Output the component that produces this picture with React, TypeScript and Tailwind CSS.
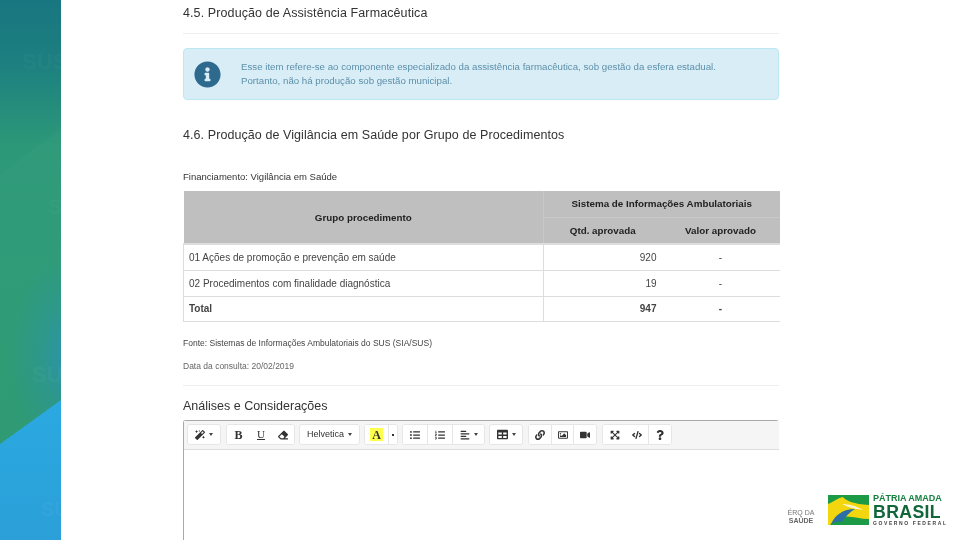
import React from "react";
import {
  FaMagic, FaEraser, FaListUl, FaListOl, FaAlignLeft,
  FaTable, FaLink, FaRegImage, FaVideo, FaExpandArrowsAlt, FaCode, FaQuestion, FaInfoCircle,
} from "react-icons/fa";

const Caret = () => (
  <span className="ml-1 inline-block h-0 w-0 border-x-[2px] border-t-[3px] border-x-transparent border-t-[#444]" />
);

function Btn({ w, children, last }: { w: string; children: React.ReactNode; last?: boolean }) {
  return (
    <div className={`flex h-full items-center justify-center bg-white text-[#333] ${w} ${last ? "" : "border-r border-[#e6e6e6]"}`}>
      {children}
    </div>
  );
}

function Group({ children }: { children: React.ReactNode }) {
  return (
    <div className="flex h-[21px] overflow-hidden rounded-[3px] border border-[#e6e6e6] bg-white">{children}</div>
  );
}

function Sidebar() {
  return (
    <div className="relative h-full w-[61px] shrink-0 overflow-hidden">
      <svg width="61" height="540" viewBox="0 0 61 540" className="block">
        <defs>
          <linearGradient id="v" x1="0" y1="0" x2="0" y2="1">
            <stop offset="0" stopColor="#187680" />
            <stop offset="0.12" stopColor="#1d8080" />
            <stop offset="0.27" stopColor="#2d9878" />
            <stop offset="0.5" stopColor="#309c78" />
            <stop offset="0.85" stopColor="#2f9a72" />
          </linearGradient>
          <radialGradient id="r" gradientUnits="userSpaceOnUse" cx="0" cy="0" r="1" gradientTransform="translate(72 358) scale(62 105)">
            <stop offset="0" stopColor="#2a93b4" stopOpacity="1" />
            <stop offset="0.5" stopColor="#2b93a4" stopOpacity="0.45" />
            <stop offset="1" stopColor="#2b93a4" stopOpacity="0" />
          </radialGradient>
          <linearGradient id="b" x1="0" y1="0" x2="0" y2="1">
            <stop offset="0" stopColor="#2aa9e0" />
            <stop offset="1" stopColor="#2b9fd8" />
          </linearGradient>
          <linearGradient id="s" x1="0" y1="0" x2="0" y2="1">
            <stop offset="0" stopColor="#ffffff" stopOpacity="0.02" />
            <stop offset="1" stopColor="#ffffff" stopOpacity="0" />
          </linearGradient>
        </defs>
        <rect width="61" height="540" fill="url(#v)" />
        <path d="M0 175 L61 128 L61 260 L0 260 Z" fill="url(#s)" />
        <rect x="0" y="240" width="61" height="225" fill="url(#r)" />
        <path d="M0 444 L61 400 L61 540 L0 540 Z" fill="url(#b)" />
        <text x="22" y="69" fontFamily="Liberation Sans, sans-serif" fontWeight="700" fontSize="22" fill="#ffffff" opacity="0.025">SUS</text>
        <text x="48" y="214" fontFamily="Liberation Sans, sans-serif" fontWeight="700" fontSize="22" fill="#ffffff" opacity="0.025">S</text>
        <text x="32" y="382" fontFamily="Liberation Sans, sans-serif" fontWeight="700" fontSize="22" fill="#ffffff" opacity="0.03">SU</text>
        <text x="41" y="516" fontFamily="Liberation Sans, sans-serif" fontWeight="700" fontSize="20" fill="#ffffff" opacity="0.03">SU</text>
      </svg>
    </div>
  );
}

function Logo() {
  return (
    <div className="absolute bottom-[14px] left-[726px] flex items-center bg-white">
      <div className="mt-[13px] mr-[13px] flex w-[28px] flex-col items-center text-[7px] leading-[8px] text-[#777]">
        <span>ÉRQ DA</span>
        <span className="font-bold text-[#666]">SAÚDE</span>
      </div>
      <svg width="41" height="30" viewBox="0 0 41 30" className="mr-[4px] block">
        <rect width="41" height="30" fill="#1d9a46" />
        <path d="M0 9 C7 6 10 3 15 2 C18 6 26 9 41 10 L41 24 C31 24 22 20 14 22 C8 24 4 27 2 30 L0 30 Z" fill="#f4d60f" />
        <path d="M3 29 C7 20 15 14 27 14 C22 17 17 22 14 27 C11 26 7 27 3 29 Z" fill="#2a70a6" />
        <path d="M14 9 C20 9 29 11 35 15 C29 14 21 13 14 9 Z" fill="#ffffff" opacity="0.8" />
        <path d="M20 30 C24 24 33 24 41 25 L41 30 Z" fill="#1d9a46" />
      </svg>
      <div className="flex w-[70px] flex-col font-['Liberation_Sans',sans-serif]">
        <span className="whitespace-nowrap text-[9px] font-bold leading-[9px] text-[#16803f]">PÁTRIA AMADA</span>
        <span className="origin-left scale-x-[0.93] text-[19px] font-bold leading-[18px] tracking-[0.4px] text-[#12663a]">BRASIL</span>
        <span className="whitespace-nowrap text-[5px] font-bold leading-[5px] tracking-[1.6px] text-[#444]">GOVERNO FEDERAL</span>
      </div>
    </div>
  );
}

function Toolbar() {
  const s = "text-[10px]";
  return (
    <div className="flex h-[29px] items-center border-b border-[#ddd] bg-[#f5f5f5] pl-[3px]">
      <div className="mr-[5px]"><Group><Btn w="w-[32px]" last><FaMagic className={s} /><Caret /></Btn></Group></div>
      <div className="mr-[4px]">
        <Group>
          <Btn w="w-[23px]" last><span className="font-['Liberation_Serif',serif] text-[12px] font-bold leading-none">B</span></Btn>
          <Btn w="w-[22px]" last><span className="font-['Liberation_Serif',serif] text-[11px] leading-none underline">U</span></Btn>
          <Btn w="w-[22px]" last><FaEraser className={s} /></Btn>
        </Group>
      </div>
      <div className="mr-[4px]">
        <Group><Btn w="w-[59px]" last><span className="text-[9px]">Helvetica</span><Caret /></Btn></Group>
      </div>
      <div className="mr-[4px]">
        <Group>
          <Btn w="w-[24px]"><span className="flex h-[13px] w-[13px] items-center justify-center bg-[#ffff4d] font-['Liberation_Serif',serif] text-[12px] font-bold leading-none">A</span></Btn>
          <Btn w="w-[8px]" last><span className="h-[2px] w-[2px] bg-[#333]" /></Btn>
        </Group>
      </div>
      <div className="mr-[4px]">
        <Group>
          <Btn w="w-[25px]"><FaListUl className={s} /></Btn>
          <Btn w="w-[25px]"><FaListOl className={s} /></Btn>
          <Btn w="w-[31px]" last><FaAlignLeft className={s} /><Caret /></Btn>
        </Group>
      </div>
      <div className="mr-[5px]">
        <Group><Btn w="w-[32px]" last><FaTable className="text-[11px]" /><Caret /></Btn></Group>
      </div>
      <div className="mr-[5px]">
        <Group>
          <Btn w="w-[23px]"><FaLink className={s} /></Btn>
          <Btn w="w-[22px]"><FaRegImage className={s} /></Btn>
          <Btn w="w-[22px]" last><FaVideo className={s} /></Btn>
        </Group>
      </div>
      <Group>
        <Btn w="w-[23px]" last><FaExpandArrowsAlt className={s} /></Btn>
        <Btn w="w-[23px]"><FaCode className={s} /></Btn>
        <Btn w="w-[22px]" last><FaQuestion className={s} /></Btn>
      </Group>
    </div>
  );
}

function Table() {
  const td = "border border-[#ddd] px-[5px] align-middle";
  const th = "border border-[#c9c9c9] bg-[#bfbfbf] pt-[2px] text-center text-[9.8px] font-bold text-[#222]";
  return (
    <table className="w-[596px] table-fixed border-collapse text-[10px] text-[#444]">
      <colgroup>
        <col className="w-[360px]" />
        <col className="w-[118px]" />
        <col className="w-[118px]" />
      </colgroup>
      <thead>
        <tr className="h-[26px]">
          <th rowSpan={2} className={`${th} border-t-0 border-l-0 border-b-2 border-b-[#ddd]`}>Grupo procedimento</th>
          <th colSpan={2} className={`${th} border-t-0 border-r-0`}>Sistema de Informações Ambulatoriais</th>
        </tr>
        <tr className="h-[27px]">
          <th className={`${th} border-r-0 border-b-2 border-b-[#ddd]`}>Qtd. aprovada</th>
          <th className={`${th} border-x-0 border-b-2 border-b-[#ddd]`}>Valor aprovado</th>
        </tr>
      </thead>
      <tbody>
        <tr className="h-[26px]">
          <td className={td}>01 Ações de promoção e prevenção em saúde</td>
          <td className={`${td} border-r-0 text-right`}>920</td>
          <td className={`${td} border-x-0 text-center`}>-</td>
        </tr>
        <tr className="h-[26px]">
          <td className={td}>02 Procedimentos com finalidade diagnóstica</td>
          <td className={`${td} border-r-0 text-right`}>19</td>
          <td className={`${td} border-x-0 text-center`}>-</td>
        </tr>
        <tr className="h-[25px] font-bold">
          <td className={td}>Total</td>
          <td className={`${td} border-r-0 text-right`}>947</td>
          <td className={`${td} border-x-0 text-center`}>-</td>
        </tr>
      </tbody>
    </table>
  );
}

export default function App() {
  return (
    <div className="relative flex h-[540px] w-[960px] overflow-hidden bg-white font-['Liberation_Sans',Arial,sans-serif] blur-[0.4px]">
      <Sidebar />
      <main className="relative flex-1">
        <div className="ml-[122px] flex w-[596px] flex-col text-[#333]">
          <h2 className="mt-[5px] text-[12.5px] leading-[16px] tracking-[0.1px]">4.5. Produção de Assistência Farmacêutica</h2>
          <hr className="mt-[12px] border-[#eee]" />
          <div className="mt-[14px] flex h-[52px] items-center rounded-[4px] border border-[#bce8f1] bg-[#d9edf7] pl-[10px] text-[#31708f]">
            <FaInfoCircle className="text-[27px] text-[#2e6a8e]" />
            <p className="ml-[20px] text-[9.7px] leading-[14px] opacity-75">
              Esse item refere-se ao componente especializado da assistência farmacêutica, sob gestão da esfera estadual.
              <br />
              Portanto, não há produção sob gestão municipal.
            </p>
          </div>
          <h2 className="mt-[27px] text-[12.5px] leading-[16px] tracking-[0.08px]">4.6. Produção de Vigilância em Saúde por Grupo de Procedimentos</h2>
          <p className="mt-[27px] text-[9.5px] leading-[14px]">Financiamento: Vigilância em Saúde</p>
          <div className="mt-[7px]"><Table /></div>
          <p className="mt-[14px] text-[8.5px] leading-[14px] text-[#444]">Fonte: Sistemas de Informações Ambulatoriais do SUS (SIA/SUS)</p>
          <p className="mt-[9px] text-[8.5px] leading-[14px] text-[#666]">Data da consulta: 20/02/2019</p>
          <hr className="mt-[12px] border-[#eee]" />
          <h3 className="mt-[12px] text-[12.5px] leading-[16px]">Análises e Considerações</h3>
          <div className="mt-[6px] h-[200px] rounded-t-[3px] border-t border-l border-[#a9a9a9]">
            <Toolbar />
          </div>
        </div>
        <Logo />
      </main>
    </div>
  );
}
